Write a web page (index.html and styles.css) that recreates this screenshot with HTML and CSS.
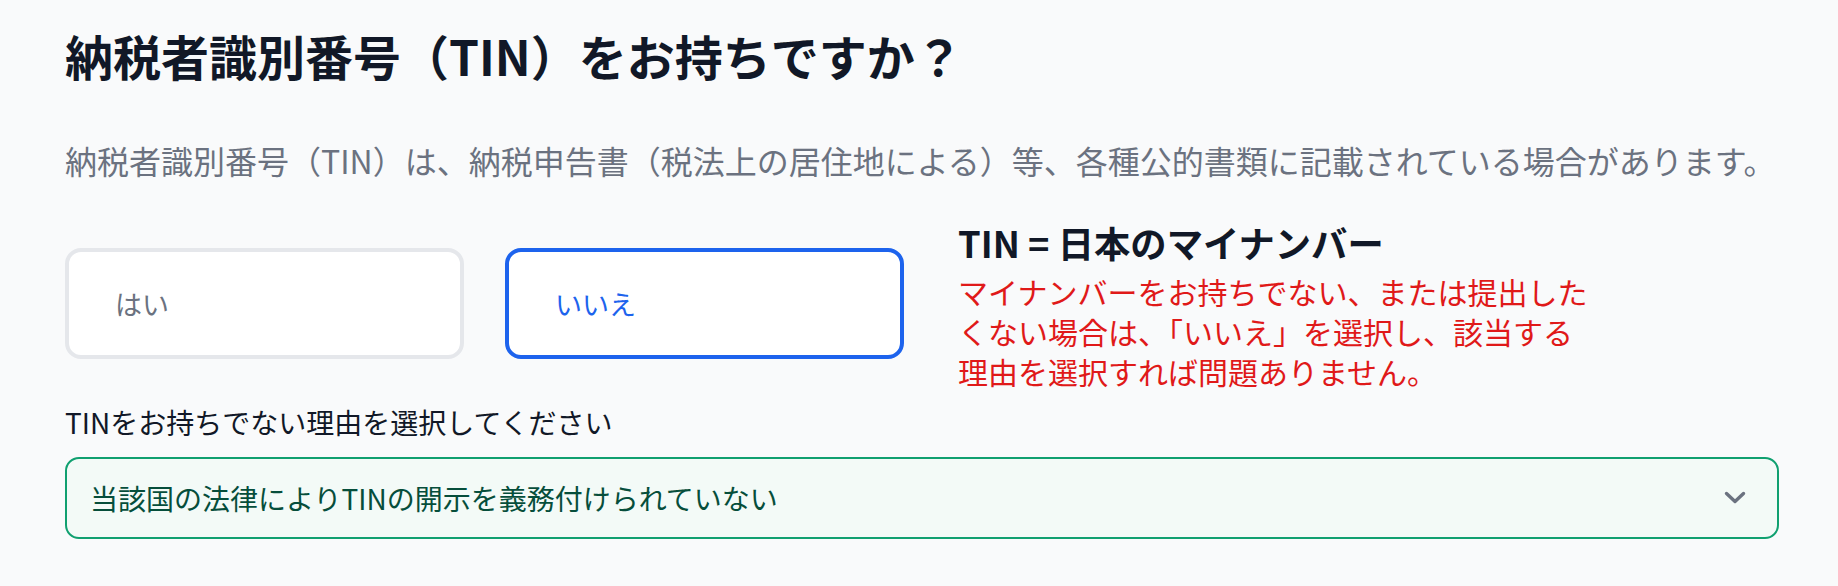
FILE: index.html
```html
<!DOCTYPE html>
<html lang="ja">
<head>
<meta charset="utf-8">
<title>TIN</title>
<link rel="stylesheet" href="styles.css">
</head>
<body>
<main class="page">
  <h1 class="title">納税者識別番号（TIN）をお持ちですか？</h1>
  <p class="lead">納税者識別番号（TIN）は、納税申告書（税法上の居住地による）等、各種公的書類に記載されている場合があります。</p>
  <div class="choice-row">
    <button class="choice">はい</button>
    <button class="choice choice-active">いいえ</button>
    <div class="note">
      <div class="note-title">TIN = 日本のマイナンバー</div>
      <p class="note-text">マイナンバーをお持ちでない、または提出した<br>くない場合は、「いいえ」を選択し、該当する<br>理由を選択すれば問題ありません。</p>
    </div>
  </div>
  <div class="field-label">TINをお持ちでない理由を選択してください</div>
  <div class="select">
    <span class="select-value">当該国の法律によりTINの開示を義務付けられていない</span>
    <svg class="chevron" width="22" height="14" viewBox="0 0 22 14"><path d="M2.5 2.5 L11 10.5 L19.5 2.5" fill="none" stroke="#6b7280" stroke-width="3.4" stroke-linecap="round" stroke-linejoin="round"/></svg>
  </div>
</main>
</body>
</html>
```
FILE: styles.css
```css
html, body {
  margin: 0;
  padding: 0;
  background: #f9fafb;
}
body {
  font-family: "Noto Sans CJK JP", "Noto Sans", sans-serif;
  color: #111827;
}
.page {
  padding: 27px 59px 0 65px;
}
.title {
  margin: 0;
  font-size: 48px;
  line-height: 57.6px;
  font-weight: 700;
  color: #111827;
}
.lead {
  margin: 52px 0 0;
  font-size: 32px;
  line-height: 47px;
  color: #6b7280;
  white-space: nowrap;
}
.choice-row {
  margin-top: 34px;
  display: flex;
  align-items: center;
  height: 171px;
}
.choice {
  width: 399px;
  height: 111px;
  box-sizing: border-box;
  border: 4px solid #e5e7eb;
  border-radius: 16px;
  background: #ffffff;
  padding: 0 0 0 46px;
  text-align: left;
  font-family: "Noto Sans CJK JP", "Noto Sans", sans-serif;
  font-size: 27px;
  color: #6b7280;
  margin: 0 41px 0 0;
}
.choice-active {
  border-color: #1d63ed;
  color: #1d63ed;
  margin-right: 54px;
}
.note {
  padding-top: 4px;
}
.note-title {
  font-size: 36.3px;
  line-height: 45px;
  font-weight: 700;
  color: #111827;
}
.note-text {
  margin: 6px 0 0;
  font-size: 30px;
  line-height: 40px;
  color: #e01919;
}
.field-label {
  margin-top: 12px;
  font-size: 28px;
  line-height: 42px;
  color: #111827;
}
.select {
  margin-top: 14px;
  height: 82px;
  box-sizing: border-box;
  border: 2px solid #10a070;
  border-radius: 14px;
  background: #f3faf7;
  display: flex;
  align-items: center;
  justify-content: space-between;
  padding: 0 31px 0 23px;
}
.select-value {
  font-size: 28px;
  color: #064e3b;
}
.chevron {
  display: block;
}
```
